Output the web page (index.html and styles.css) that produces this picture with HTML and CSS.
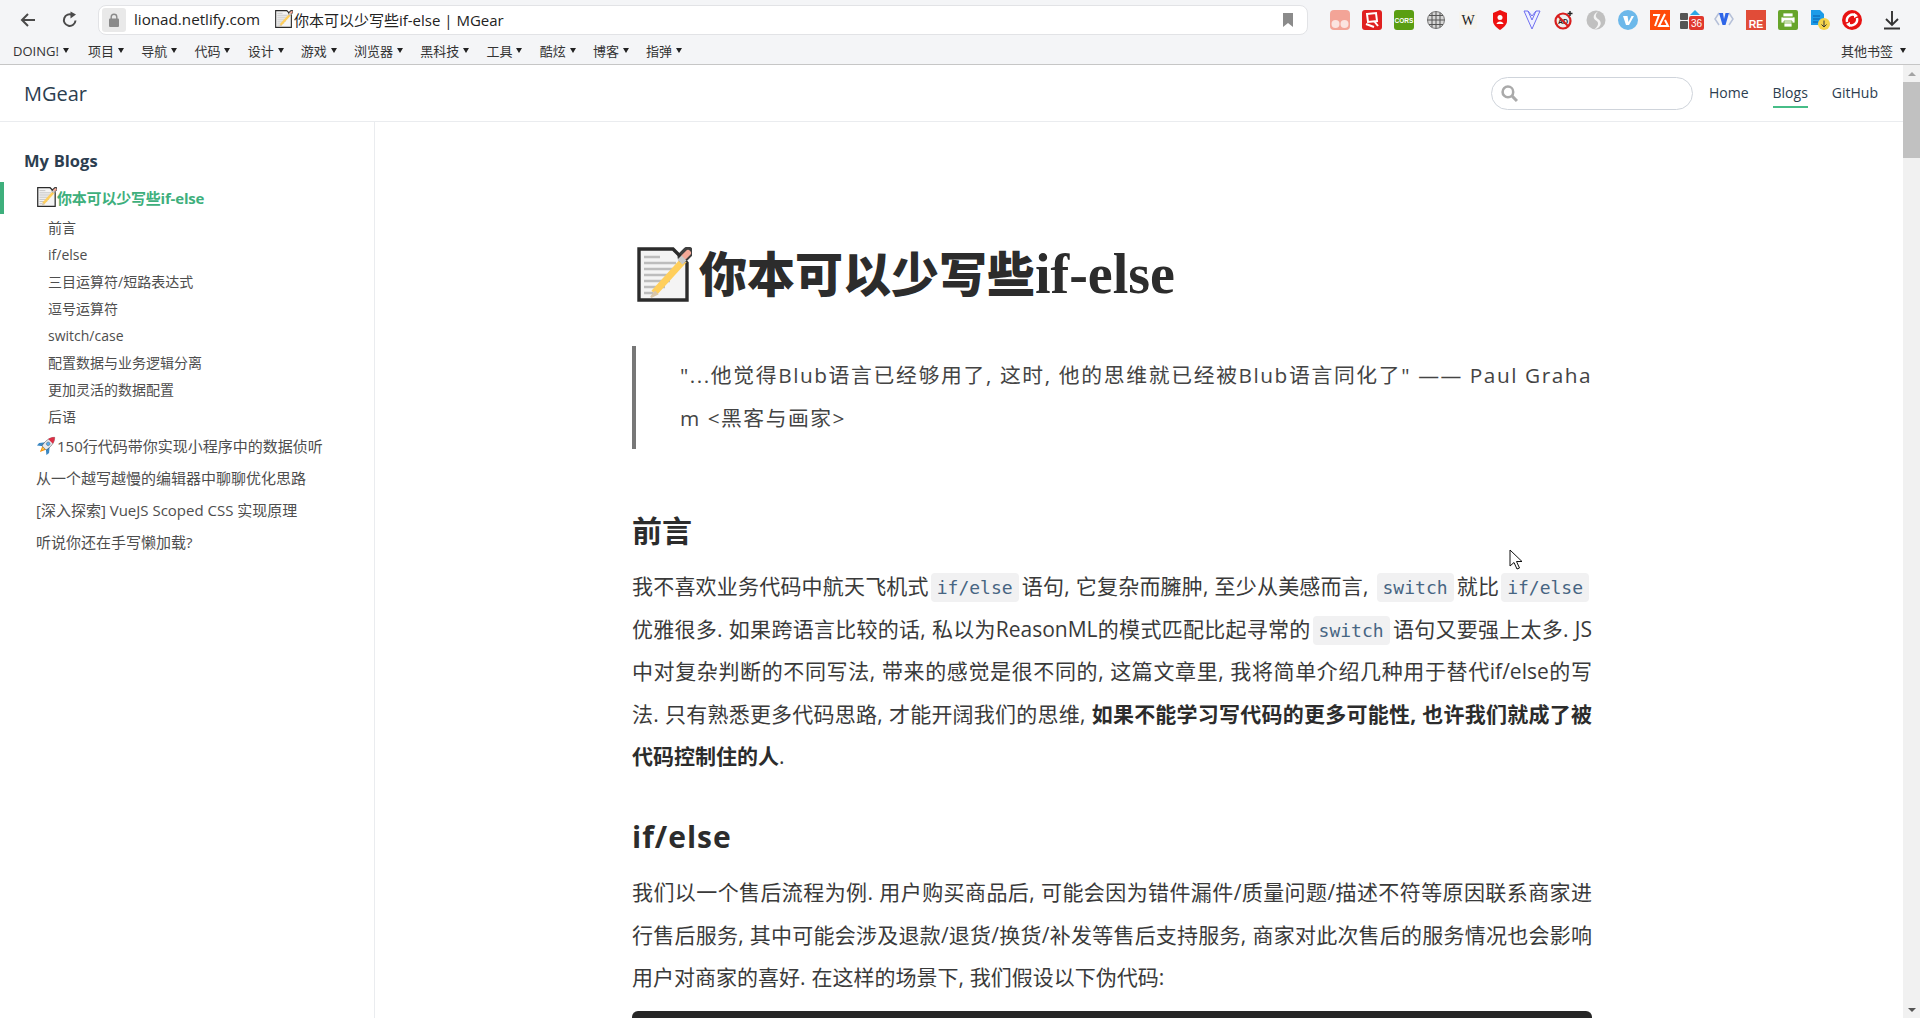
FILE: index.html
```html
<!DOCTYPE html>
<html lang="zh-CN">
<head>
<meta charset="utf-8">
<title>你本可以少写些if-else | MGear</title>
<link rel="stylesheet" href="styles.css">
</head>
<body>
<svg class="defs" width="0" height="0">
  <defs>
    <symbol id="memo" viewBox="0 0 55 55">
      <path d="M2 2H36L50 16V53H2Z" fill="#f4f4f4" stroke="#2b2b2b" stroke-width="3.4"/>
      <path d="M7 10H23M7 16H39M7 22H39M7 28H36M7 34H33M7 40H28M7 46H16" stroke="#bdbdbd" stroke-width="2.4"/>
      <path d="M17 46 L47 13" stroke="#ffcf5c" stroke-width="7"/>
      <path d="M44 12 L49 7" stroke="#2b2b2b" stroke-width="11" stroke-linecap="round" opacity=".9" transform="translate(2 -2)"/>
      <path d="M46 11 L50 7" stroke="#f4a998" stroke-width="6" stroke-linecap="round" transform="translate(1 -1)"/>
      <path d="M43 15 L47 11" stroke="#c9c9c9" stroke-width="7"/>
      <path d="M14 50 L18 45 L20 47Z" fill="#d9c6a8" stroke="#d9c6a8" stroke-width="2"/>
    </symbol>
    <symbol id="rocket" viewBox="-2 -2 24 24">
      <g transform="rotate(45 10 10)">
        <path d="M7 15H13L10 22Z" fill="#f4900c"/>
        <path d="M8.500 15H11.500L10 19Z" fill="#ffcc4d"/>
        <path d="M6.500 9L1.500 15 2 19 7.500 14.500Z" fill="#3b88c3"/>
        <path d="M13.500 9L18.500 15 18 19 12.500 14.500Z" fill="#3b88c3"/>
        <path d="M10 -3C14.500 1 15 9 13.500 15H6.500C5 9 5.500 1 10 -3Z" fill="#e6eaee" stroke="#2b2b2b" stroke-width=".5"/>
        <path d="M10 -3C12.200 -1 13.500 1.500 14 4H6C6.500 1.500 7.800 -1 10 -3Z" fill="#dd2e44"/>
        <circle cx="10" cy="8" r="2.200" fill="#55acee" stroke="#66757f" stroke-width=".7"/>
      </g>
    </symbol>
  </defs>
</svg>

<header class="chrome">
  <div class="toolbar">
    <svg class="nav-icon back" width="18" height="18" viewBox="0 0 18 18"><path d="M16 9H3M9 3L3 9l6 6" fill="none" stroke="#4a4a4a" stroke-width="2"/></svg>
    <svg class="nav-icon reload" width="18" height="18" viewBox="0 0 18 18"><path d="M14.500 9.500A5.800 5.800 0 1 1 11.500 4" fill="none" stroke="#4a4a4a" stroke-width="2"/><path d="M9.500 0.500L15 3.500 9.500 7.500Z" fill="#4a4a4a"/></svg>
    <div class="omnibox">
      <span class="lock-box"><svg width="10" height="14" viewBox="0 0 10 14"><path d="M2.200 6V4a2.800 2.800 0 0 1 5.600 0V6" fill="none" stroke="#8a8a8a" stroke-width="1.400"/><rect y="5.500" width="10" height="8.500" rx="1" fill="#8a8a8a"/></svg></span>
      <span class="url">lionad.netlify.com</span>
      <svg class="tab-icon" width="18" height="18"><use href="#memo"/></svg>
      <span class="page-title">你本可以少写些if-else | MGear</span>
      <svg class="star" width="10" height="14" viewBox="0 0 10 14"><path d="M0 0H10V14L5 10 0 14Z" fill="#8b8b8b"/></svg>
    </div>
    <div class="ext-row">
      <svg width="20" height="20" viewBox="0 0 20 20"><rect width="20" height="20" rx="4" fill="#f3a497"/><circle cx="5.500" cy="14" r="4" fill="#fbe3df"/><circle cx="14.500" cy="14" r="4" fill="#fbe3df"/></svg>
      <svg width="20" height="20" viewBox="0 0 20 20"><rect y="0" width="20" height="20" rx="3" fill="#e02020"/><path d="M5 4L14 3 15 11 6 12ZM12 11L16 16M4 14L12 17" fill="none" stroke="#fff" stroke-width="2"/></svg>
      <svg width="20" height="20" viewBox="0 0 20 20"><rect width="20" height="20" rx="3" fill="#5a9e12"/><text x="10" y="13" class="ext-text cors">CORS</text></svg>
      <svg width="20" height="20" viewBox="0 0 20 20"><circle cx="10" cy="10" r="8.500" fill="#d6d6d6" stroke="#777"/><path d="M10 1.500V18.500M1.500 10H18.500M3 5.500H17M3 14.500H17M6 2.500V17.500M14 2.500V17.500" stroke="#555" stroke-width="1"/></svg>
      <svg width="20" height="20" viewBox="0 0 20 20"><rect x="1" y="1" width="18" height="18" rx="2" fill="#f6f4ee"/><text x="10" y="15" class="ext-text wiki">W</text></svg>
      <svg width="20" height="20" viewBox="0 0 20 20"><path d="M10 0L17 3V11C17 15 13 18 10 20 7 18 3 15 3 11V3Z" fill="#ee1111"/><circle cx="10" cy="7.500" r="2.500" fill="#fff"/><path d="M6.500 14C7 10.500 13 10.500 13.500 14Z" fill="#fff"/></svg>
      <svg width="20" height="20" viewBox="0 0 20 20"><path d="M2 1L10 19 18 1 14 1 10 10 6 1ZM6 1L10 6 14 1" fill="#eef0ff" stroke="#6f6ff0" stroke-width="1"/></svg>
      <svg width="20" height="20" viewBox="0 0 20 20"><circle cx="9" cy="11" r="7.500" fill="#eee" stroke="#d81e1e" stroke-width="2.200"/><text x="9" y="14" class="ext-text ad">AD</text><path d="M4 6L14 16" stroke="#d81e1e" stroke-width="2"/><path d="M16 1V6M13.500 3.500H18.500" stroke="#222" stroke-width="1.400"/></svg>
      <svg width="20" height="20" viewBox="0 0 20 20"><circle cx="10" cy="10" r="9.500" fill="#c0c0c0"/><path d="M13 1C6 4 7 9 10 10.500 13 12 13 16 8 19.500 15 18 17 12 12 9 9 7 9 4 13 1Z" fill="#f4f4f4"/></svg>
      <svg width="20" height="20" viewBox="0 0 20 20"><circle cx="10" cy="10" r="10" fill="#6cb8ea"/><path d="M5 6H9.500L10.500 12 13.500 6H16L11 15H8Z" fill="#fff"/></svg>
      <svg width="20" height="20" viewBox="0 0 20 20"><rect width="20" height="20" fill="#ff4a0a"/><path d="M3 5H9L5 16M15 4L9 16H18L15 10" fill="none" stroke="#fff" stroke-width="2"/></svg>
      <svg class="ext-wide" width="24" height="20" viewBox="0 0 24 20"><rect x="0" y="3" width="8" height="7" rx="1" fill="#555"/><rect x="0" y="11" width="8" height="8" rx="1" fill="#555"/><path d="M10 5L15 0 20 5Z" fill="#2aa7e8"/><rect x="9" y="6" width="15" height="14" rx="2" fill="#e0382e"/><text x="16.500" y="17" class="ext-text num">36</text></svg>
      <svg width="20" height="20" viewBox="0 0 20 20"><path d="M5 3L1 9 5 15M15 3L19 9 15 15" fill="none" stroke="#b5c0d8" stroke-width="1.500"/><path d="M5 3H9L10 9 11.500 3H15L11.500 15H8.500Z" fill="#2f66e8"/></svg>
      <svg width="20" height="20" viewBox="0 0 20 20"><rect width="20" height="20" fill="#e14c38"/><text x="10" y="17.500" class="ext-text re">RE</text></svg>
      <svg width="20" height="20" viewBox="0 0 20 20"><rect width="20" height="20" rx="2" fill="#67a52b"/><path d="M5 3H15V7H5ZM3 7H17V13H3ZM6 11H14V17H6Z" fill="#fff" stroke="#67a52b" stroke-width=".8"/></svg>
      <svg width="20" height="20" viewBox="0 0 20 20"><path d="M1 0H10L14 4V15H1Z" fill="#1c9be8"/><path d="M3 6H10M3 9H10M3 12H8" stroke="#0b5aa8" stroke-width="1"/><circle cx="14" cy="14" r="6" fill="#f5d44a"/><path d="M14 10.500V17M11.500 14.500L14 17 16.500 14.500" fill="none" stroke="#333" stroke-width="1"/></svg>
      <svg width="20" height="20" viewBox="0 0 20 20"><circle cx="10" cy="10" r="10" fill="#e81212"/><path d="M5 12A6 6 0 0 1 14 5.500M15 8A6 6 0 0 1 6 14.500" fill="none" stroke="#fff" stroke-width="2.400"/><path d="M12 3L16 6 12 8ZM8 17L4 14 8 12Z" fill="#fff"/></svg>
      <svg class="download" width="20" height="20" viewBox="0 0 20 20"><path d="M10 1V14M4 9L10 15 16 9M2 18.500H18" fill="none" stroke="#333" stroke-width="1.900"/></svg>
    </div>
  </div>
  <nav class="bookmarks">
    <span class="bm">DOING!</span><span class="bm">项目</span><span class="bm">导航</span><span class="bm">代码</span><span class="bm">设计</span><span class="bm">游戏</span><span class="bm">浏览器</span><span class="bm">黑科技</span><span class="bm">工具</span><span class="bm">酷炫</span><span class="bm">博客</span><span class="bm">指弹</span>
    <span class="bm bm-other">其他书签</span>
  </nav>
</header>

<div class="viewport">
  <div class="page">
    <header class="navbar">
      <a class="brand">MGear</a>
      <div class="nav-right">
        <div class="search"><svg width="17" height="17" viewBox="0 0 16 16"><circle cx="6.500" cy="6.500" r="5" fill="none" stroke="#aaa" stroke-width="2.400"/><path d="M10.500 10.500L15 15" stroke="#aaa" stroke-width="2.800"/></svg></div>
        <a class="nav-link">Home</a>
        <a class="nav-link is-current">Blogs</a>
        <a class="nav-link">GitHub</a>
      </div>
    </header>
    <div class="columns">
      <aside class="sidebar">
        <p class="side-title">My Blogs</p>
        <a class="side-item active"><svg class="side-emoji" width="20" height="20"><use href="#memo"/></svg>你本可以少写些if-else</a>
        <ul class="side-sub">
          <li>前言</li><li>if/else</li><li>三目运算符/短路表达式</li><li>逗号运算符</li><li>switch/case</li><li>配置数据与业务逻辑分离</li><li>更加灵活的数据配置</li><li>后语</li>
        </ul>
        <a class="side-item"><svg class="side-emoji" width="20" height="20"><use href="#rocket"/></svg>150行代码带你实现小程序中的数据侦听</a>
        <a class="side-item plain">从一个越写越慢的编辑器中聊聊优化思路</a>
        <a class="side-item plain">[深入探索] VueJS Scoped CSS 实现原理</a>
        <a class="side-item plain">听说你还在手写懒加载?</a>
      </aside>
      <main class="content">
        <h1 class="title"><svg class="title-emoji" width="55" height="55"><use href="#memo"/></svg>你本可以少写些<span class="serif">if-else</span></h1>
        <blockquote class="quote">"...他觉得Blub语言已经够用了, 这时, 他的思维就已经被Blub语言同化了" —— Paul Graham &lt;黑客与画家&gt;</blockquote>
        <h2 class="h-first">前言</h2>
        <p><span class="full-lines">我不喜欢业务代码中航天飞机式<code>if/else</code>语句, 它复杂而臃肿, 至少从美感而言, <code>switch</code>就比<code>if/else</code>优雅很多. 如果跨语言比较的话, 私以为ReasonML的模式匹配比起寻常的<code>switch</code>语句又要强上太多. JS中对复杂判断的不同写法, 带来的感觉是很不同的, 这篇文章里, 我将简单介绍几种用于替代if/else的写</span>法. 只有熟悉更多代码思路, 才能开阔我们的思维, <strong>如果不能学习写代码的更多可能性, 也许我们就成了被代码控制住的人</strong>.</p>
        <h2 class="h-second">if/else</h2>
        <p>我们以一个售后流程为例. 用户购买商品后, 可能会因为错件漏件/质量问题/描述不符等原因联系商家进行售后服务, 其中可能会涉及退款/退货/换货/补发等售后支持服务, 商家对此次售后的服务情况也会影响用户对商家的喜好. 在这样的场景下, 我们假设以下伪代码:</p>
        <div class="codeblock"></div>
      </main>
    </div>
    <svg class="cursor" width="14" height="22" viewBox="0 0 14 22"><path d="M1 1V17L5 13.500 8 20 10.500 19 7.500 12.500H13Z" fill="#fff" stroke="#111" stroke-width="1"/></svg>
  </div>
  <div class="scrollbar">
    <span class="arrow up"></span>
    <span class="thumb"></span>
    <span class="arrow down"></span>
  </div>
</div>
</body>
</html>
```
FILE: styles.css
```css
* { box-sizing: border-box; }
html, body { margin: 0; height: 100%; overflow: hidden; }
body {
  display: flex;
  flex-direction: column;
  background: #fff;
  color: #3a3a3a;
  font-family: "Open Sans", "Noto Sans CJK SC", sans-serif;
}
.defs { position: absolute; }

/* browser chrome */
.chrome { background: #f4f5f7; border-bottom: 1px solid #c6c6c6; flex: none; }
.toolbar { height: 34px; display: flex; align-items: center; padding: 6px 0 0 19px; }
.nav-icon { flex: none; }
.reload { margin-left: 24px; }
.omnibox {
  margin-left: 19px;
  width: 1210px;
  height: 30px;
  background: #fff;
  border: 1px solid #e2e3e6;
  border-radius: 8px;
  display: flex;
  align-items: center;
  padding: 0 14px 2px 3px;
  font-size: 15px;
  color: #222;
}
.lock-box { width: 24px; height: 24px; background: #e9e9e9; border-radius: 3px; display: flex; align-items: center; justify-content: center; margin-top: 2px; }
.url { margin-left: 8px; font-size: 15.200px; }
.tab-icon { margin-left: 15px; }
.page-title { font-size: 15px; margin-left: 1px; }
.star { margin-left: auto; margin-top: 2px; }
.ext-row { display: flex; align-items: center; margin-left: 22px; gap: 12px; }
.ext-row svg { flex: none; }
.ext-row .ext-wide { margin: 0 -2px; }
.ext-row .download { margin-left: 8px; }
.ext-text { text-anchor: middle; font-family: "Liberation Sans", sans-serif; }
.cors { font-size: 6.500px; font-weight: 700; fill: #fff; }
.wiki { font-size: 14px; font-family: "Liberation Serif", serif; fill: #222; }
.ad { font-size: 7px; font-weight: 700; fill: #222; }
.num { font-size: 10px; fill: #fff; }
.re { font-size: 10.500px; font-weight: 700; fill: #fff; }

.bookmarks { height: 30px; display: flex; align-items: center; padding: 3px 14px 0 13px; font-size: 13px; color: #333; gap: 17.200px; }
.bm { display: inline-flex; align-items: center; white-space: nowrap; line-height: 20px; }
.bm:first-child { margin-right: 2px; }
.bm::after { content: ""; margin-left: 4px; border-left: 3px solid transparent; border-right: 3px solid transparent; border-top: 5px solid #222; }
.bm-other { margin-left: auto; }
.bm-other::after { margin-left: 7px; }

/* viewport */
.viewport { flex: 1; display: flex; min-height: 0; }
.page { flex: 1; min-width: 0; position: relative; overflow: hidden; }
.scrollbar { width: 17px; background: #f1f1f1; display: flex; flex-direction: column; flex: none; }
.arrow { height: 17px; flex: none; display: flex; align-items: center; justify-content: center; }
.arrow::after { content: ""; border-left: 4px solid transparent; border-right: 4px solid transparent; }
.up::after { border-bottom: 4px solid #a3a3a3; }
.down { margin-top: auto; }
.down::after { border-top: 4px solid #555; }
.thumb { height: 76px; background: #c1c1c1; }

/* navbar */
.navbar {
  height: 57px;
  border-bottom: 1px solid #eaecef;
  display: flex;
  align-items: center;
  justify-content: space-between;
  padding: 0 25px 0 24px;
}
.brand { font-size: 20px; font-weight: 500; color: #2c3e50; }
.nav-right { display: flex; align-items: center; }
.search { width: 202px; height: 33px; border: 1px solid #cfd4db; border-radius: 17px; display: flex; align-items: center; padding-left: 9px; margin-right: 16px; }
.nav-link { font-size: 14px; font-weight: 500; color: #2c3e50; margin-left: 24px; line-height: 26px; border-bottom: 2px solid transparent; margin-top: 2px; }
.search + .nav-link { margin-left: 0; }
.is-current { border-bottom-color: #46bd87; }

/* columns */
.columns { display: flex; }
.sidebar { width: 375px; flex: none; height: 900px; border-right: 1px solid #eaecef; padding-top: 27px; font-size: 14px; color: #2c3e50; }
.side-title { margin: 0 0 9px; padding-left: 24px; font-size: 16.500px; font-weight: 700; line-height: 24px; }
.side-item { display: flex; align-items: center; height: 32px; padding: 0 0 2px 37px; font-size: 15px; color: #4e4e4e; }
.side-emoji { flex: none; }
.active { color: #3eaf7c; font-weight: 700; border-left: 4px solid #3eaf7c; padding-left: 33px; letter-spacing: -.2px; }
.plain { padding-left: 36px; }
.side-sub { list-style: none; margin: 0; padding: 0 0 0 48px; }
.side-sub li { height: 27px; line-height: 27px; font-size: 14px; color: #4e4e4e; }

/* article */
.content { width: 960px; margin-left: 257px; padding-top: 122px; font-size: 21px; line-height: 42.600px; flex: none; }
.title { margin: 0 0 42px; display: flex; align-items: center; font-size: 48px; line-height: 60px; font-weight: 900; color: #2c2c2c; }
.title-emoji { margin: 0 7px 0 5px; flex: none; }
.serif { font-family: "Liberation Serif", serif; font-size: 56px; font-weight: 700; }
.quote { margin: 0 0 62px; border-left: 4px solid #777; padding: 7.500px 0 9.500px 44px; line-height: 43px; font-size: 20.800px; letter-spacing: 1.500px; word-break: break-all; text-align: justify; color: #444; }
h2 { margin: 0; font-weight: 700; color: #2c2c2c; }
.h-first { font-size: 30px; line-height: 40px; margin-bottom: 14px; }
.h-second { font-size: 30px; line-height: 44px; margin: 37px 0 12px; letter-spacing: 1px; }
p { margin: 0; text-align: justify; word-spacing: .5px; }
.full-lines { display: block; text-align-last: justify; }
strong { color: #2c2c2c; }
code { font-family: "DejaVu Sans Mono", monospace; font-size: 18px; line-height: 1; color: #476582; background: #f1f1f2; padding: 4px 6px; margin: 0 3px 0 2px; border-radius: 4px; word-spacing: 0; }
.codeblock { height: 60px; margin-top: 12px; background: #272727; border-radius: 6px; }

.cursor { position: absolute; left: 1509px; top: 484px; }
```
